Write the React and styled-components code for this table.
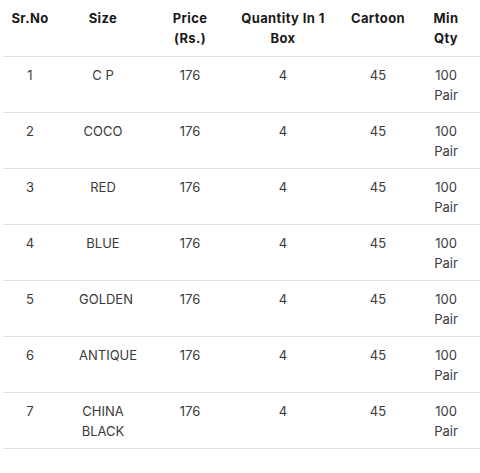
import React from 'react'
import styled, { createGlobalStyle } from 'styled-components'

const GlobalStyle = createGlobalStyle`
  body {
    margin: 0;
    background: #fff;
    font-family: 'Inter', 'Noto Sans', sans-serif;
  }
`

const rows = [
    ['1', 'C P'],
    ['2', 'COCO'],
    ['3', 'RED'],
    ['4', 'BLUE'],
    ['5', 'GOLDEN'],
    ['6', 'ANTIQUE'],
    ['7', 'CHINA BLACK'],
]

const App = () => {
    return (
        <>
            <GlobalStyle />
            <Table>
                <Row head>
                    <Cell head>Sr.No</Cell>
                    <Cell head>Size</Cell>
                    <Cell head pad={ 22 }>Price (Rs.)</Cell>
                    <Cell head>Quantity In 1 Box</Cell>
                    <Cell head>Cartoon</Cell>
                    <Cell head pad={ 8 }>Min Qty</Cell>
                </Row>
                { rows.map(([no, size]) => (
                    <Row key={ no }>
                        <Cell>{ no }</Cell>
                        <Cell pad={ 22 }>{ size }</Cell>
                        <Cell>176</Cell>
                        <Cell>4</Cell>
                        <Cell>45</Cell>
                        <Cell pad={ 8 }>100 Pair</Cell>
                    </Row>
                )) }
            </Table>
        </>
    )
}

const Table = styled.div`
	margin-left: 3px;
	width: 477px;
	display: flex;
	flex-direction: column;
`

const Row = styled.div`
	display: grid;
	grid-template-columns: 54px 92px 82px 104px 86px 50px;
	height: ${ props => props.head ? 57 : 56 }px;
	box-sizing: border-box;
	border-bottom: 1px solid #e2e2e2;
`

const Cell = styled.div`
	padding: 8px ${ props => props.pad || 0 }px;
	text-align: center;
	font-size: 13px;
	line-height: 20px;
	font-weight: ${ props => props.head ? 700 : 400 };
	letter-spacing: ${ props => props.head ? '0.4px' : '0' };
	color: ${ props => props.head ? '#1a1a1a' : '#3a3a3a' };
`

export default App
